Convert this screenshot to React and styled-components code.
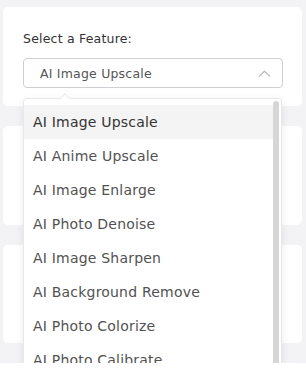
import React from 'react';
import styled, { createGlobalStyle } from 'styled-components';

const GlobalStyle = createGlobalStyle`
  html, body {
    margin: 0;
    padding: 0;
    background: #fff;
  }
  * {
    box-sizing: border-box;
  }
`;

const Page = styled.div`
  position: relative;
  height: 363px;
  overflow: hidden;
  background: #f3f3f5;
  padding: 7px 4px 0 3px;
  display: flex;
  flex-direction: column;
  gap: 20px;
  font-family: "DejaVu Sans", sans-serif;
`;

const Card = styled.div`
  position: relative;
  background: #fff;
  border-radius: 5px;
  height: ${(p) => p.h}px;
  padding: 24px 19px 0 20px;
  flex-shrink: 0;
`;

const Label = styled.div`
  font-size: 12.5px;
  color: #333;
  letter-spacing: 0.2px;
  margin-bottom: 12px;
`;

const SelectBox = styled.div`
  position: relative;
  height: 30px;
  border: 1px solid #cfcfcf;
  border-radius: 4px;
  display: flex;
  align-items: center;
  justify-content: space-between;
  padding: 0 11px 0 16px;
  font-size: 12.5px;
  letter-spacing: 0.2px;
  color: #555;
`;

const Menu = styled.div`
  position: absolute;
  left: 20px;
  top: 91px;
  width: 259px;
  height: 300px;
  background: #fff;
  border: 1px solid #e8e8e8;
  border-radius: 4px;
  box-shadow: 0 2px 8px rgba(0, 0, 0, 0.08);
  padding-top: 6px;
  z-index: 5;

  &::before {
    content: '';
    position: absolute;
    left: 37px;
    top: -4px;
    width: 7px;
    height: 7px;
    background: #fff;
    border-left: 1px solid #ececec;
    border-top: 1px solid #ececec;
    transform: rotate(45deg);
  }
`;

const Scrollbar = styled.div`
  position: absolute;
  right: 2px;
  top: 2px;
  width: 6px;
  height: 320px;
  border-radius: 3px;
  background: #d6d6d6;
`;

const Item = styled.div`
  height: 34px;
  display: flex;
  align-items: center;
  padding-left: 9px;
  font-size: 14px;
  letter-spacing: 0.2px;
  color: ${(p) => (p.active ? '#333' : '#525252')};
  background: ${(p) => (p.active ? '#f4f4f4' : 'transparent')};
  margin-right: 8px;
`;

const features = [
  'AI Image Upscale',
  'AI Anime Upscale',
  'AI Image Enlarge',
  'AI Photo Denoise',
  'AI Image Sharpen',
  'AI Background Remove',
  'AI Photo Colorize',
  'AI Photo Calibrate',
];

function Chevron() {
  return (
    <svg width="13" height="7" viewBox="0 0 13 7">
      <path d="M1 6.5 L6.5 1.2 L12 6.5" fill="none" stroke="#bdbdbd" strokeWidth="1.2" />
    </svg>
  );
}

export default function App() {
  return (
    <>
      <GlobalStyle />
      <Page>
        <Card h={99}>
          <Label>Select a Feature:</Label>
          <SelectBox>
            <span>AI Image Upscale</span>
            <Chevron />
          </SelectBox>
          <Menu>
            <Scrollbar />
            {features.map((f, i) => (
              <Item key={f} active={i === 0}>
                {f}
              </Item>
            ))}
          </Menu>
        </Card>
        <Card h={99} />
        <Card h={98} />
      </Page>
    </>
  );
}
